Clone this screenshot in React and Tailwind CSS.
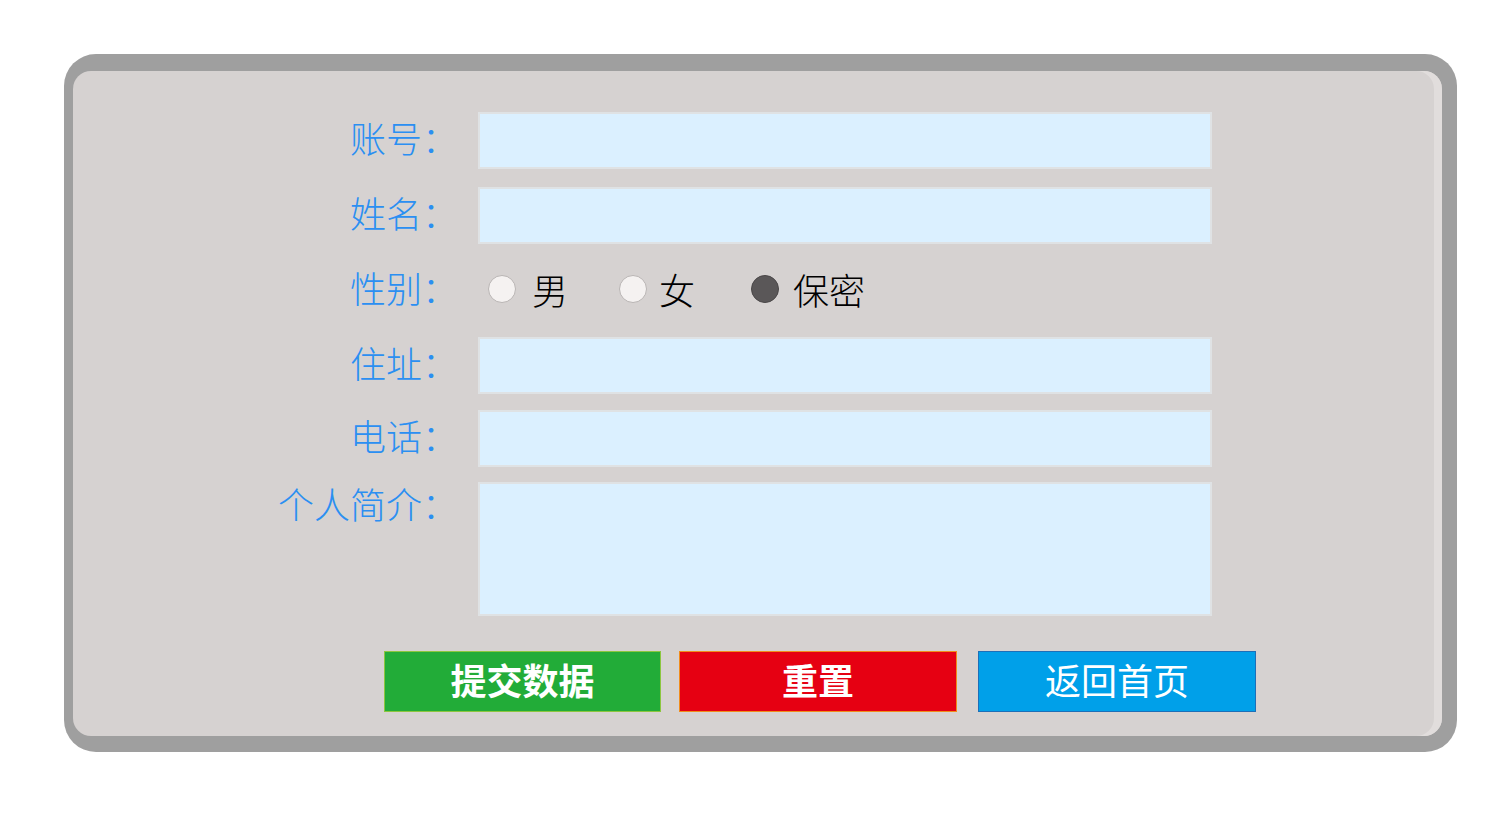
export default function App() {
  const font = { fontFamily: '"Noto Sans CJK SC", sans-serif' };
  const label =
    "w-[458px] shrink-0 text-right text-[36px] leading-[51px] pb-[6px] text-[#2b8ff2] font-light";
  const input =
    "ml-[20px] w-[734px] h-[57px] bg-[#dbf0ff] border-2 border-[#dfe2e4] outline-none";
  const btn = "h-[61px] text-white text-[36px] leading-[55px] pb-[6px]";
  return (
    <div className="w-[1500px] h-[813px] bg-white" style={font}>
      <div className="ml-[64px] pt-[54px]">
        <div className="w-[1393px] h-[698px] bg-[#9f9f9f] rounded-[32px] pt-[17px] pl-[9px] pr-[15px] pb-[16px]">
          <div className="w-full h-full bg-[#d6d2d1] rounded-[18px] shadow-[inset_-8px_0_0_#e1dddc] pt-[41px]">
            <div className="flex flex-col -ml-[73px]">
              <div className="flex items-center">
                <div className={label}>账号：</div>
                <input className={input} />
              </div>
              <div className="flex items-center mt-[18px]">
                <div className={label}>姓名：</div>
                <input className={input} />
              </div>
              <div className="flex items-center mt-[18px] h-[57px]">
                <div className={label}>性别：</div>
                <div className="ml-[30px] flex items-center text-[36px] text-black font-light leading-none -mt-[3px]">
                  <span className="w-[28px] h-[28px] rounded-full bg-[#f5f2f1] border border-[#b9b5b4]" />
                  <span className="ml-[16px]">男</span>
                  <span className="ml-[51px] w-[28px] h-[28px] rounded-full bg-[#f5f2f1] border border-[#b9b5b4]" />
                  <span className="ml-[12px]">女</span>
                  <span className="ml-[56px] w-[28px] h-[28px] rounded-full bg-[#5a5758] border border-[#4a4748]" />
                  <span className="ml-[14px]">保密</span>
                </div>
              </div>
              <div className="flex items-center mt-[18px]">
                <div className={label}>住址：</div>
                <input className={input} />
              </div>
              <div className="flex items-center mt-[16px]">
                <div className={label}>电话：</div>
                <input className={input} />
              </div>
              <div className="flex items-start mt-[15px]">
                <div className={label + " -mt-[4px]"}>个人简介：</div>
                <textarea className="ml-[20px] w-[734px] h-[134px] bg-[#dbf0ff] border-2 border-[#dfe2e4] outline-none resize-none" />
              </div>
              <div className="flex mt-[35px] ml-[384px]">
                <button className={btn + " w-[277px] bg-[#22ac38] border border-[#8cc63f] font-bold"}>
                  提交数据
                </button>
                <button className={btn + " ml-[18px] w-[278px] bg-[#e60012] border border-[#f08c1c] font-bold"}>
                  重置
                </button>
                <button className={btn + " ml-[21px] w-[278px] bg-[#00a0e9] border border-[#1d6fb8] font-normal"}>
                  返回首页
                </button>
              </div>
            </div>
          </div>
        </div>
      </div>
    </div>
  );
}
